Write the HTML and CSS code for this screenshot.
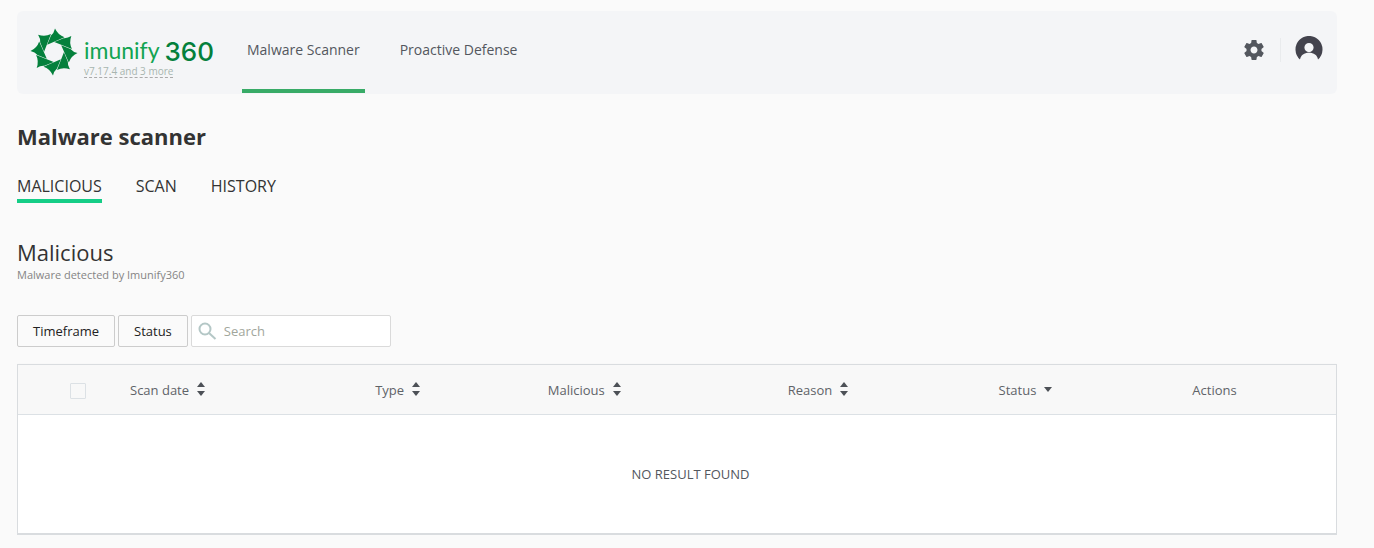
FILE: index.html
```html
<!DOCTYPE html>
<html lang="en">
<head>
  <meta charset="UTF-8" />
  <meta name="viewport" content="width=device-width, initial-scale=1.0" />
  <title>Imunify360 - Malware scanner</title>
  <link rel="stylesheet" href="styles.css">
</head>
<body>
  <header class="topbar">
    <div class="brand">
      <svg class="brand-mark" viewBox="-24 -24 48 48" aria-hidden="true">
        <defs>
          <path id="blade" d="M1 -23.500 Q4 -17 10.500 -14.800 L-6.800 -7.200 L-3 -16.500 Q0 -19 1 -23.500Z" />
        </defs>
        <use href="#blade" />
        <use href="#blade" transform="rotate(45)" />
        <use href="#blade" transform="rotate(90)" />
        <use href="#blade" transform="rotate(135)" />
        <use href="#blade" transform="rotate(180)" />
        <use href="#blade" transform="rotate(225)" />
        <use href="#blade" transform="rotate(270)" />
        <use href="#blade" transform="rotate(315)" />
      </svg>
      <div class="brand-text">
        <div class="brand-name"><span class="brand-word">imunify</span><span class="brand-number">360</span></div>
        <span class="version">v7.17.4 and 3 more</span>
      </div>
    </div>
    <nav class="main-nav">
      <a class="active" href="#scanner">Malware Scanner</a>
      <a href="#proactive">Proactive Defense</a>
    </nav>
    <div class="topbar-tools">
      <button class="icon-button settings" type="button" aria-label="Settings">
        <svg width="24" height="24" viewBox="0 0 24 24"><path d="M19.43 12.98c.04-.32.07-.64.07-.98s-.03-.66-.07-.98l2.11-1.65c.19-.15.24-.42.12-.64l-2-3.46c-.12-.22-.39-.3-.61-.22l-2.49 1c-.52-.4-1.08-.73-1.69-.98l-.38-2.65C14.46 2.18 14.25 2 14 2h-4c-.25 0-.46.18-.49.42l-.38 2.65c-.61.25-1.17.59-1.69.98l-2.49-1c-.23-.09-.49 0-.61.22l-2 3.46c-.13.22-.07.49.12.64l2.11 1.65c-.04.32-.07.65-.07.98s.03.66.07.98l-2.11 1.65c-.19.15-.24.42-.12.64l2 3.46c.12.22.39.3.61.22l2.49-1c.52.4 1.08.73 1.69.98l.38 2.65c.03.24.24.42.49.42h4c.25 0 .46-.18.49-.42l.38-2.65c.61-.25 1.17-.59 1.69-.98l2.49 1c.23.09.49 0 .61-.22l2-3.46c.12-.22.07-.49-.12-.64l-2.11-1.65zM12 15.500c-1.930 0-3.500-1.570-3.500-3.500s1.570-3.500 3.500-3.500 3.500 1.570 3.500 3.500-1.570 3.500-3.500 3.500z" /></svg>
      </button>
      <button class="icon-button account" type="button" aria-label="Account">
        <svg width="28" height="24" viewBox="0 0 28 24"><path fill-rule="evenodd" d="M5 23.500 A13.500 13.500 0 1 1 23 23.500 C22 19 19 16.800 14 16.800 S6 19 5 23.500Z M14 7 a4.600 4.600 0 1 0 0 9.200 a4.600 4.600 0 1 0 0 -9.200Z" /></svg>
      </button>
    </div>
  </header>

  <main>
    <h1>Malware scanner</h1>
    <nav class="tabs">
      <a class="active" href="#malicious">MALICIOUS</a>
      <a href="#scan">SCAN</a>
      <a href="#history">HISTORY</a>
    </nav>

    <h2>Malicious</h2>
    <p class="subtitle">Malware detected by Imunify360</p>

    <div class="filters">
      <button class="filter" type="button">Timeframe</button>
      <button class="filter" type="button">Status</button>
      <label class="search">
        <svg width="19" height="18" viewBox="0 0 19 18" aria-hidden="true"><circle cx="7" cy="7" r="5.500" /><path d="M11 11 L17.500 17" /></svg>
        <input type="text" placeholder="Search" aria-label="Search">
      </label>
    </div>

    <table class="results">
      <colgroup>
        <col class="col-check">
        <col class="col-date">
        <col class="col-type">
        <col class="col-malicious">
        <col class="col-reason">
        <col class="col-status">
        <col>
      </colgroup>
      <thead>
        <tr>
          <th class="check"><input type="checkbox" aria-label="Select all"></th>
          <th>Scan date<span class="sort"></span></th>
          <th>Type<span class="sort"></span></th>
          <th>Malicious<span class="sort"></span></th>
          <th>Reason<span class="sort"></span></th>
          <th>Status<span class="sort desc"></span></th>
          <th>Actions</th>
        </tr>
      </thead>
      <tbody>
        <tr>
          <td class="empty" colspan="7">NO RESULT FOUND</td>
        </tr>
      </tbody>
    </table>
  </main>
</body>
</html>
```
FILE: styles.css
```css
* {
  box-sizing: border-box;
}
body {
  margin: 11px 37px 0 17px;
  background-color: #fafafa;
  color: #333;
  font-family: "Open Sans", sans-serif;
  font-size: 13px;
}
a {
  color: inherit;
  text-decoration: none;
}
button,
input {
  font: inherit;
}

/* top bar */
.topbar {
  display: flex;
  height: 83px;
  border-radius: 6px;
  background-color: #f4f5f7;
}
.brand {
  display: flex;
  width: 225px;
  padding: 17px 0 0 13px;
}
.brand-mark {
  width: 48px;
  height: 48px;
  margin-right: 6px;
  fill: #04803c;
}
.brand-text {
  padding-top: 6px;
}
.brand-name {
  display: flex;
  align-items: center;
  gap: 5px;
  height: 32px;
  line-height: 32px;
}
.brand-word {
  color: #12a452;
  font-family: Lato, sans-serif;
  font-size: 23px;
}
.brand-number {
  padding-top: 3px;
  color: #04803c;
  font-family: Inter, sans-serif;
  font-size: 26px;
  font-weight: 500;
}
.version {
  display: block;
  width: max-content;
  border-bottom: 1px dashed #aaa;
  color: #a8b5b0;
  font-size: 10px;
  line-height: 11px;
}
.main-nav {
  display: flex;
  gap: 30px;
}
.main-nav a {
  padding: 0 5px;
  border-bottom: 4px solid transparent;
  margin-bottom: 1px;
  color: #53575e;
  font-size: 14px;
  line-height: 78px;
}
.main-nav a.active {
  border-bottom-color: #38ab67;
}
.topbar-tools {
  display: flex;
  align-items: center;
  margin-left: auto;
  padding-right: 14px;
  padding-bottom: 6px;
}
.icon-button {
  height: 24px;
  padding: 0;
  border: 0;
  background: none;
  cursor: pointer;
}
.icon-button svg {
  display: block;
}
.settings {
  padding-right: 14px;
  border-right: 1px solid #e9ebed;
  fill: #53575e;
}
.account {
  height: 28px;
  padding: 0 0 4px 14px;
  fill: #43434d;
}

/* page title and tabs */
h1 {
  margin: 27px 0 0;
  font-size: 22px;
  line-height: 30px;
}
.tabs {
  display: flex;
  gap: 34px;
  margin-top: 23px;
}
.tabs a {
  padding-bottom: 1px;
  border-bottom: 4px solid transparent;
  font-size: 16px;
  line-height: 24px;
}
.tabs a.active {
  border-bottom-color: #15cd86;
}
h2 {
  margin: 34px 0 0;
  font-size: 22px;
  font-weight: 400;
  line-height: 30px;
}
.subtitle {
  margin: 0;
  color: #858585;
  font-size: 11px;
  line-height: 16px;
}

/* filters */
.filters {
  display: flex;
  gap: 3px;
  margin: 32px 0 17px;
}
.filter {
  height: 32px;
  padding: 0 15px;
  border: 1px solid #ccc;
  border-radius: 2px;
  background-color: #fafafa;
  color: #222;
  cursor: pointer;
}
.search {
  display: flex;
  align-items: center;
  width: 200px;
  height: 32px;
  padding: 0 6px;
  border: 1px solid #dadada;
  border-radius: 2px;
  background-color: #fff;
}
.search svg {
  flex: none;
  fill: none;
  stroke: #b4c7c6;
  stroke-width: 2;
}
.search input {
  width: 100%;
  padding: 0 0 0 7px;
  border: 0;
  outline: 0;
  background: none;
}
.search input::placeholder {
  color: #a1a69c;
}

/* results */
.results {
  width: 100%;
  table-layout: fixed;
  border: 1px solid #d9dcdf;
  border-bottom-width: 2px;
  border-spacing: 0;
  background-color: #fff;
  box-shadow: 0 1px 2px rgba(0, 0, 0, 0.12);
}
.col-check {
  width: 8.5%;
}
.col-date {
  width: 18.6%;
}
.col-type {
  width: 13.1%;
}
.col-malicious {
  width: 18.2%;
}
.col-reason {
  width: 16%;
}
.col-status {
  width: 14.7%;
}
.results th {
  height: 50px;
  padding: 0;
  border-bottom: 1px solid #dce1e5;
  background-color: #f8f8f8;
  color: #5f6368;
  font-weight: 400;
  line-height: 22px;
  text-align: left;
}
.results .check {
  padding: 2px 0 0 52px;
}
.check input {
  display: block;
  appearance: none;
  width: 16px;
  height: 16px;
  margin: 0;
  border: 1px solid #dce1e5;
  border-radius: 1px;
}
.sort {
  display: inline-flex;
  flex-direction: column;
  gap: 4px;
  margin: 0 0 4px 8px;
  vertical-align: middle;
}
.sort::before,
.sort::after {
  content: "";
  border: 4px solid transparent;
}
.sort::before {
  border-top: 0;
  border-bottom: 5px solid #4d5157;
}
.sort::after {
  border-bottom: 0;
  border-top: 5px solid #4d5157;
}
.sort.desc::before {
  display: none;
}
.results .empty {
  height: 118px;
  padding: 0 0 0 27px;
  color: #53575e;
  text-align: center;
}
```
